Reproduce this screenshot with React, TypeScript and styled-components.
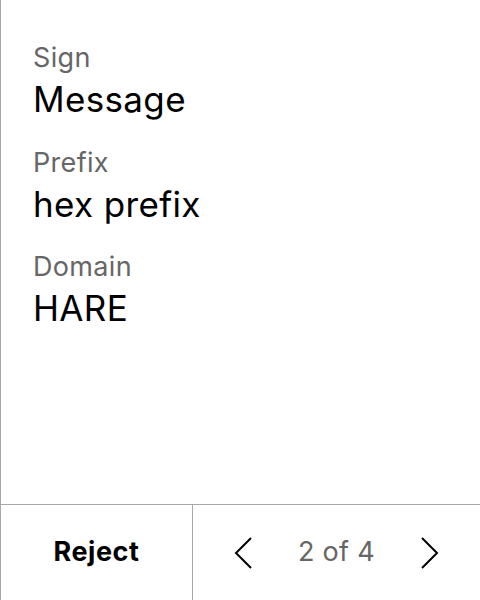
import React from 'react';
import styled, { createGlobalStyle } from 'styled-components';

const Global = createGlobalStyle`
  html, body {
    margin: 0;
    padding: 0;
    background: #fff;
  }
  body {
    font-family: Inter, "Noto Sans", sans-serif;
    letter-spacing: 0.02em;
  }
`;

const Screen = styled.div`
  width: 480px;
  height: 600px;
  box-sizing: border-box;
  border-left: 1px solid #a8a8a8;
  display: flex;
  flex-direction: column;
`;

const Details = styled.div`
  flex: 1;
  padding: 41px 0 0 32px;
`;

const Label = styled.div`
  font-size: 27px;
  line-height: 34px;
  color: #666;
`;

const Value = styled.div`
  font-size: 35px;
  line-height: 42px;
  letter-spacing: 0.01em;
  color: #000;
  margin: 3px 0 25.5px;
`;

const Footer = styled.div`
  height: 96px;
  box-sizing: border-box;
  border-top: 1px solid #a8a8a8;
  display: flex;
`;

const RejectButton = styled.button`
  width: 192px;
  border: none;
  border-right: 1px solid #a8a8a8;
  background: none;
  font-family: inherit;
  font-size: 27px;
  font-weight: 700;
  letter-spacing: 0.02em;
  color: #000;
  padding: 0 0 2px;
`;

const Pager = styled.div`
  flex: 1;
  display: flex;
  align-items: center;
  justify-content: center;
  gap: 44px;
`;

const PageText = styled.span`
  font-size: 27px;
  color: #666;
  margin-bottom: 2px;
`;

const Arrow = styled.button`
  border: none;
  background: none;
  padding: 0;
  display: flex;
`;

const Chevron = ({ dir }: { dir: 'left' | 'right' }) => (
  <svg width="20" height="32" viewBox="0 0 20 32" fill="none">
    <polyline
      points={dir === 'left' ? '17,1 2,16 17,31' : '3,1 18,16 3,31'}
      stroke="#000"
      strokeWidth="2"
    />
  </svg>
);

const rows = [
  { label: 'Sign', value: 'Message' },
  { label: 'Prefix', value: 'hex prefix' },
  { label: 'Domain', value: 'HARE' },
];

export default function App() {
  return (
    <>
      <Global />
      <Screen>
        <Details>
          {rows.map(r => (
            <div key={r.label}>
              <Label>{r.label}</Label>
              <Value>{r.value}</Value>
            </div>
          ))}
        </Details>
        <Footer>
          <RejectButton>Reject</RejectButton>
          <Pager>
            <Arrow>
              <Chevron dir="left" />
            </Arrow>
            <PageText>2 of 4</PageText>
            <Arrow>
              <Chevron dir="right" />
            </Arrow>
          </Pager>
        </Footer>
      </Screen>
    </>
  );
}
